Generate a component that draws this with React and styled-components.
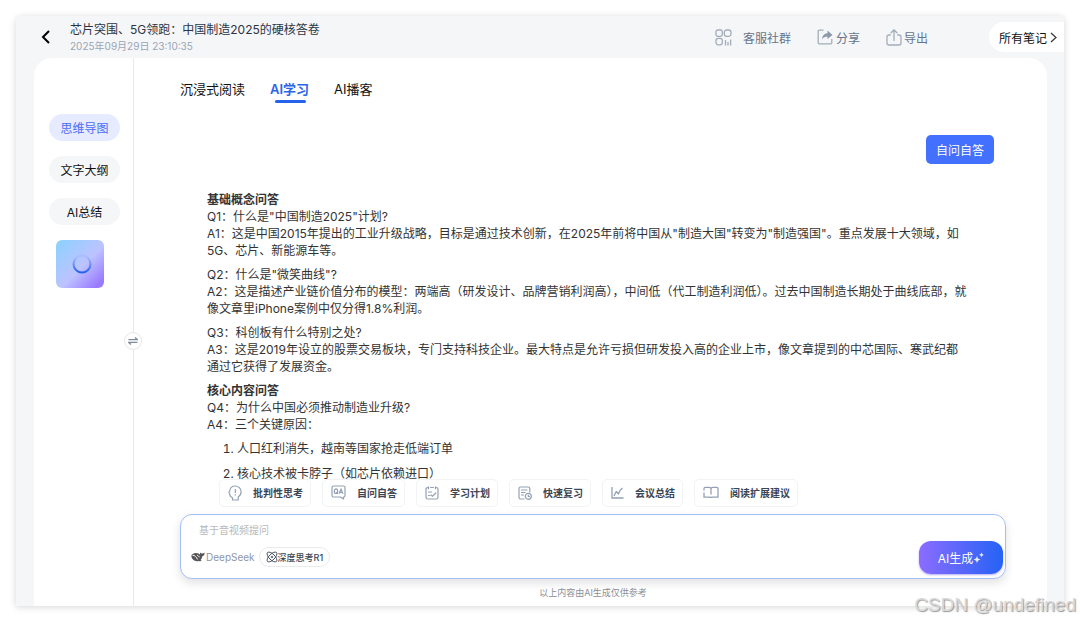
import { useState } from "react";
import { styled, createGlobalStyle } from "styled-components";

const tabs = ["沉浸式阅读", "AI学习", "AI播客"];
const views = ["思维导图", "文字大纲", "AI总结"];

const prompts = [
    { text: "批判性思考", icon: <HeadIcon /> },
    { text: "自问自答", icon: <QaIcon /> },
    { text: "学习计划", icon: <PlanIcon /> },
    { text: "快速复习", icon: <ReviewIcon /> },
    { text: "会议总结", icon: <ChartIcon /> },
    { text: "阅读扩展建议", icon: <BookIcon /> },
];

export default function App() {

    const [tab, setTab] = useState("AI学习")
    const [view, setView] = useState("思维导图")
    const [question, setQuestion] = useState("")

    return (
        <>
            <GlobalStyle />
            <Page>
                <Window>
                    <Header>
                        <BackButton aria-label="返回">
                            <svg width="10" height="16" viewBox="0 0 10 16"><path d="M8 2 2 8l6 6" fill="none" stroke="#000" strokeWidth="2" /></svg>
                        </BackButton>
                        <Heading>
                            <Title>芯片突围、5G领跑：中国制造2025的硬核答卷</Title>
                            <Time>2025年09月29日 23:10:35</Time>
                        </Heading>
                        <Actions>
                            <Action $gap="11px"><GroupIcon />客服社群</Action>
                            <Action $gap="3px"><ShareIcon />分享</Action>
                            <Action $gap="2px"><ExportIcon />导出</Action>
                        </Actions>
                        <NotesButton>
                            所有笔记
                            <svg width="7" height="11" viewBox="0 0 7 11"><path d="m1 1 5 4.500-5 4.500" fill="none" stroke="#333" strokeWidth="1.200" /></svg>
                        </NotesButton>
                    </Header>

                    <Sheet>
                        <Sidebar>
                            {views.map(v => (
                                <ViewButton key={v} $active={v === view} onClick={() => setView(v)}>{v}</ViewButton>
                            ))}
                            <Thumb><SpinnerIcon /></Thumb>
                            <SwapButton aria-label="切换"><SwapIcon /></SwapButton>
                        </Sidebar>

                        <Main>
                            <Tabs>
                                {tabs.map(t => (
                                    <Tab key={t} $active={t === tab} onClick={() => setTab(t)}>{t}</Tab>
                                ))}
                            </Tabs>

                            <ModeButton>自问自答</ModeButton>

                            <Article>
                                <div>
                                    <Subtitle>基础概念问答</Subtitle>
                                    <p>Q1：什么是"中国制造2025"计划?</p>
                                    <p>A1：这是中国2015年提出的工业升级战略，目标是通过技术创新，在2025年前将中国从"制造大国"转变为"制造强国"。重点发展十大领域，如5G、芯片、新能源车等。</p>
                                </div>
                                <div>
                                    <p>Q2：什么是"微笑曲线"?</p>
                                    <p>A2：这是描述产业链价值分布的模型：两端高（研发设计、品牌营销利润高），中间低（代工制造利润低）。过去中国制造长期处于曲线底部，就像文章里iPhone案例中仅分得1.8%利润。</p>
                                </div>
                                <div>
                                    <p>Q3：科创板有什么特别之处?</p>
                                    <p>A3：这是2019年设立的股票交易板块，专门支持科技企业。最大特点是允许亏损但研发投入高的企业上市，像文章提到的中芯国际、寒武纪都通过它获得了发展资金。</p>
                                </div>
                                <div>
                                    <Subtitle>核心内容问答</Subtitle>
                                    <p>Q4：为什么中国必须推动制造业升级?</p>
                                    <p>A4：三个关键原因：</p>
                                </div>
                                <Reasons>
                                    <li>人口红利消失，越南等国家抢走低端订单</li>
                                    <li>核心技术被卡脖子（如芯片依赖进口）</li>
                                </Reasons>
                            </Article>

                            <Prompts>
                                {prompts.map(p => (
                                    <Prompt key={p.text}>{p.icon}{p.text}</Prompt>
                                ))}
                            </Prompts>

                            <Composer>
                                <Fields>
                                    <Question
                                        aria-label="提问"
                                        placeholder="基于音视频提问"
                                        value={question}
                                        onChange={e => setQuestion(e.target.value)}
                                    />
                                    <Models>
                                        <Brand><WhaleIcon />DeepSeek</Brand>
                                        <ModelButton><AtomIcon />深度思考R1</ModelButton>
                                    </Models>
                                </Fields>
                                <Generate>AI生成<SparkIcon /></Generate>
                            </Composer>
                            <Notice>以上内容由AI生成仅供参考</Notice>
                        </Main>
                    </Sheet>
                </Window>
                <Watermark>CSDN @undefined</Watermark>
            </Page>
        </>
    )
}

function GroupIcon() {
    return (
        <svg width="17" height="17" viewBox="0 0 17 17" fill="none" stroke="#a3adba" strokeWidth="1.300">
            <rect x="1" y="1" width="6.300" height="6.300" rx="1.800" />
            <rect x="9.300" y="1" width="6.700" height="6.300" rx="2.400" />
            <rect x="1" y="9.300" width="6.300" height="6.500" rx="2.200" />
            <path d="M10.500 11v5.500M13 13v3.500M15.600 10.500v6" />
        </svg>
    )
}

function ShareIcon() {
    return (
        <svg width="16" height="16" viewBox="0 0 16 16" fill="none" stroke="#a3adba" strokeWidth="1.300">
            <path d="M6.500 1.200H2.200a1 1 0 0 0-1 1v11.600a1 1 0 0 0 1 1h11.600a1 1 0 0 0 1-1V10" />
            <path d="M5 10.500c.3-4 2.200-6 5.500-6.200V1.500l5 4.400-5 4.200V7.500c-2.500 0-4.200.8-5.500 3Z" fill="#8d98a8" stroke="none" />
        </svg>
    )
}

function ExportIcon() {
    return (
        <svg width="16" height="17" viewBox="0 0 16 17" fill="none" stroke="#a3adba" strokeWidth="1.300" strokeLinecap="round">
            <path d="M4.300 6H3a2 2 0 0 0-2 2v6a2 2 0 0 0 2 2h10a2 2 0 0 0 2-2V8a2 2 0 0 0-2-2h-1.300" />
            <path d="M8 11.500V1M5 3.700 8 .9l3 2.800" />
        </svg>
    )
}

function SpinnerIcon() {
    return (
        <svg width="20" height="20" viewBox="0 0 20 20" fill="none">
            <defs>
                <linearGradient id="ring" x1="0" y1="0" x2="0" y2="1">
                    <stop offset="0.1" stopColor="#a9bcff" />
                    <stop offset="0.5" stopColor="#6f91f5" />
                    <stop offset="1" stopColor="#2461f0" />
                </linearGradient>
            </defs>
            <circle cx="10" cy="10" r="8.500" stroke="url(#ring)" strokeWidth="2" />
        </svg>
    )
}

function SwapIcon() {
    return (
        <svg width="10" height="8" viewBox="0 0 10 8" fill="none" stroke="#7f8b9a" strokeWidth="1.300">
            <path d="M.5 2.700h9L7 .5M9.500 5.300h-9L3 7.500" />
        </svg>
    )
}

function HeadIcon() {
    return (
        <svg width="14" height="16" viewBox="0 0 14 16" fill="none" stroke="#94a1b3" strokeWidth="1.200" strokeLinejoin="round">
            <path d="M4.500 15v-2.200C2.700 12 1.600 10.500 1.600 8.500L.8 7.500l.9-1.300C2 3 4.300 1 7.200 1c3.300 0 5.900 2.500 5.900 5.800 0 2.200-1.100 4-2.900 5.100V15Z" />
            <path d="M7.300 4v4M7.300 9.200v1.300" />
        </svg>
    )
}

function QaIcon() {
    return (
        <svg width="15" height="15" viewBox="0 0 15 15" fill="none" stroke="#94a1b3" strokeWidth="1.200" strokeLinejoin="round">
            <path d="M2.500 1h10A1.500 1.500 0 0 1 14 2.500v8A1.500 1.500 0 0 1 12.500 12v2L9.500 12h-7A1.500 1.500 0 0 1 1 10.500v-8A1.500 1.500 0 0 1 2.500 1Z" />
            <ellipse cx="5" cy="6.200" rx="1.700" ry="2.300" />
            <path d="m5.300 7.200 1.600 1.700M8.200 8.800 10 3.900l1.900 4.900M8.900 7.300h2.200" />
        </svg>
    )
}

function PlanIcon() {
    return (
        <svg width="14" height="14" viewBox="0 0 14 14" fill="none" stroke="#94a1b3" strokeWidth="1.200" strokeLinecap="round">
            <path d="M3.500 1.500H2.800A1.800 1.800 0 0 0 1 3.300v7.900A1.800 1.800 0 0 0 2.800 13h8.400a1.800 1.800 0 0 0 1.800-1.800V3.300a1.800 1.800 0 0 0-1.800-1.800h-.7M5.500 1.500h3M3.500.8v2M10.500.8v2" />
            <path d="M3.500 6h3M3.500 9.500h1.200M6 9l1.500 1.200L10.800 7" />
        </svg>
    )
}

function ReviewIcon() {
    return (
        <svg width="14" height="14" viewBox="0 0 14 14" fill="none" stroke="#94a1b3" strokeWidth="1.200" strokeLinecap="round">
            <path d="M6 13H2.500A1.500 1.500 0 0 1 1 11.500v-9A1.500 1.500 0 0 1 2.500 1h7.800a1.500 1.500 0 0 1 1.500 1.500V6M3.500 4h5.500M3.500 6.500h3.500M3.500 9h2" />
            <circle cx="10.300" cy="10.300" r="3" />
            <path d="M10.300 9v1.500h1.200" />
        </svg>
    )
}

function ChartIcon() {
    return (
        <svg width="13" height="12" viewBox="0 0 13 12" fill="none" stroke="#94a1b3" strokeWidth="1.300">
            <path d="M1 0v11h11.500M3 9l2.200-4.500 2.300 2.300 1.700-3.500L11.500 1" />
        </svg>
    )
}

function BookIcon() {
    return (
        <svg width="16" height="13" viewBox="0 0 16 13" fill="none" stroke="#94a1b3" strokeWidth="1.300">
            <path d="M8 8.500V3c0-1-.8-1.700-2-1.700H2.200A1.200 1.200 0 0 0 1 2.500v2M1 6.500v4.700h5.500c.8 0 1.500.3 1.500.8 0-.5.700-.8 1.500-.8H15V2.500a1.200 1.200 0 0 0-1.200-1.200H10C8.800 1.300 8 2 8 3" />
        </svg>
    )
}

function WhaleIcon() {
    return (
        <svg width="14" height="10" viewBox="0 0 14 10">
            <path d="M.4 3.600C1 1.600 3 .8 5 .9c.8 0 1.300.2 1.900.7.900-.1 1.300.5 2.100 1 .2-.8-.2-1.500.1-2.200.5.700 1 .9 1.700 1 .9.100 1.900 0 2.800-.9.200 2-.8 3.400-2.400 3.900C11 6 10.300 7.200 9.500 8c.5.400 1 .5 1.400.7-1 .6-2.100.6-3 .2C4.300 10 .2 7.700.4 3.600Z" fill="#555" />
            <path d="M1.500 3.300c2.300-.2 3.900 1.700 5 4.100M6 3.600c1.100-.2 2 .5 2.200 1.700" fill="none" stroke="#fff" strokeWidth="1" />
        </svg>
    )
}

function AtomIcon() {
    return (
        <svg width="12" height="12" viewBox="0 0 12 12" fill="none" stroke="#3c4654" strokeWidth=".9">
            <ellipse cx="6" cy="6" rx="6.300" ry="2.900" transform="rotate(45 6 6)" />
            <ellipse cx="6" cy="6" rx="6.300" ry="2.900" transform="rotate(-45 6 6)" />
            <circle cx="6" cy="6" r=".8" />
        </svg>
    )
}

function SparkIcon() {
    return (
        <svg width="11" height="12" viewBox="0 0 11 12" fill="#e4eaff">
            <path d="M4 3.700c.5 2.600 1.200 3.200 3.700 3.800C5.200 8.100 4.500 8.800 4 11.400 3.500 8.800 2.800 8.100.3 7.500 2.800 6.900 3.500 6.300 4 3.700ZM8.500.3c.4 1.700.9 2.200 2.500 2.600-1.600.4-2.100.9-2.500 2.600-.4-1.700-.9-2.200-2.500-2.600 1.600-.4 2.100-.9 2.500-2.600Z" />
        </svg>
    )
}

const GlobalStyle = createGlobalStyle`
    * {
        box-sizing: border-box;
    }

    body {
        margin: 0;
        background-color: #FFFFFF;
        font-family: Inter, "Noto Sans CJK SC", sans-serif;
        font-size: 12px;
        color: #333333;
    }

    p, h1, h2, ol {
        margin: 0;
        padding: 0;
    }

    button, input {
        border: none;
        background: none;
        padding: 0;
        font: inherit;
        color: inherit;
    }

    button {
        display: flex;
        align-items: center;
        justify-content: center;
        white-space: nowrap;
        cursor: pointer;
    }

    svg {
        flex-shrink: 0;
    }
`

const Page = styled.div`
    position: relative;
    height: 100vh;
    padding: 16px;
`

const Window = styled.div`
    display: flex;
    flex-direction: column;
    height: 100%;
    overflow: hidden;

    border-radius: 6px 4px 0 0;
    background-color: #F5F6F8;
    box-shadow: 0 1px 7px rgba(0, 0, 0, 0.16);
`

const Header = styled.header`
    display: flex;
    align-items: center;
    height: 42px;
    padding-left: 24px;
    flex-shrink: 0;
`

const BackButton = styled.button`
    width: 12px;
    height: 24px;
`

const Heading = styled.div`
    flex: 1;
    padding-left: 18px;
`

const Title = styled.h1`
    font-size: 12px;
    line-height: 18px;
    font-weight: 400;
    color: #2B3544;
`

const Time = styled.p`
    font-size: 10px;
    line-height: 14px;
    color: #9AA5B5;
`

const Actions = styled.div`
    display: flex;
    gap: 26px;
    margin-right: 61px;
`

const Action = styled.button`
    gap: ${props => props.$gap};
    color: #66758A;
`

const NotesButton = styled.button`
    gap: 3px;
    height: 30px;
    padding: 0 7px 0 10px;

    color: #111111;
    background-color: #FFFFFF;
    border-radius: 15px 0 0 15px;
`

const Sheet = styled.div`
    display: flex;
    flex: 1;
    min-height: 0;
    margin: 0 17px 0 18px;

    background-color: #FFFFFF;
    border-radius: 18px 18px 0 0;
`

const Sidebar = styled.nav`
    position: relative;
    display: flex;
    flex-direction: column;
    gap: 15px;
    width: 100px;
    padding: 56px 13px 0 15px;
    flex-shrink: 0;
    border-right: 1px solid #E9EAED;
`

const ViewButton = styled.button`
    height: 27px;
    padding-bottom: 1px;
    border-radius: 14px;
    color: ${props => props.$active ? "#4A6CF7" : "#111111"};
    background-color: ${props => props.$active ? "#E6EBFF" : "#F5F6F8"};
`

const Thumb = styled.div`
    display: flex;
    align-items: center;
    justify-content: center;
    width: 48px;
    height: 48px;
    margin-left: 7px;
    padding-left: 4px;

    border-radius: 6px;
    background: linear-gradient(135deg, #8AD2FF 0%, #BDC3FF 55%, #9A7BFF 90%);
`

const SwapButton = styled.button`
    position: absolute;
    top: 50%;
    right: -9px;
    width: 18px;
    height: 18px;

    border: 1px solid #E4E6EA;
    border-radius: 50%;
    background-color: #FFFFFF;
`

const Main = styled.main`
    display: flex;
    flex-direction: column;
    flex: 1;
    min-width: 0;
    padding: 21px 41px 0 46px;
`

const Tabs = styled.div`
    display: flex;
    gap: 25px;
    flex-shrink: 0;
`

const Tab = styled.button`
    position: relative;
    height: 24px;
    padding-bottom: 5px;

    font-size: 13px;
    font-weight: ${props => props.$active ? 600 : 400};
    color: ${props => props.$active ? "#2B66E8" : "#111111"};

    &::after {
        content: "";
        display: ${props => props.$active ? "block" : "none"};
        position: absolute;
        bottom: 0;
        left: 5px;
        right: 3px;
        height: 3px;
        border-radius: 2px;
        background-color: #2563EB;
    }
`

const ModeButton = styled.button`
    align-self: flex-end;
    flex-shrink: 0;
    height: 29px;
    margin: 32px 12px 0 0;
    padding: 0 10px;

    color: #FFFFFF;
    background-color: #4370FF;
    border-radius: 5px;
`

const Article = styled.article`
    display: flex;
    flex-direction: column;
    gap: 7px;
    flex: 1;
    min-height: 0;
    overflow: hidden;
    margin: 27px 0 -4px;
    padding: 0 38px 0 27px;

    line-height: 17px;

    & > * {
        flex-shrink: 0;
    }
`

const Subtitle = styled.h2`
    font-size: 12px;
    font-weight: 600;
`

const Reasons = styled.ol`
    padding-left: 30px;

    li + li {
        margin-top: 8px;
    }
`

const Prompts = styled.div`
    display: flex;
    gap: 11px;
    flex-shrink: 0;
    padding-left: 39px;
`

const Prompt = styled.button`
    gap: 11px;
    height: 28px;
    padding: 0 7px 1px 8px;

    font-size: 10px;
    font-weight: 600;
    color: #3A4556;
    background-color: #FFFFFF;
    border: 1px solid #F2F3F5;
    border-radius: 5px;
`

const Composer = styled.div`
    display: flex;
    align-items: flex-end;
    flex-shrink: 0;
    height: 65px;
    margin-top: 7px;
    padding: 0 2px 4px 10px;

    border: 1px solid #A3BFFA;
    border-radius: 12px;
    background-color: #FFFFFF;
    box-shadow: 0 4px 10px rgba(0, 0, 0, 0.12);
`

const Fields = styled.div`
    flex: 1;
    height: 100%;
    padding-bottom: 7px;
    display: flex;
    flex-direction: column;
    justify-content: space-between;
`

const Question = styled.input`
    height: 30px;
    padding-left: 8px;
    font-size: 10px;
    outline: none;

    &::placeholder {
        color: #B8B8B8;
    }
`

const Models = styled.div`
    display: flex;
    align-items: center;
    gap: 4px;
`

const Brand = styled.span`
    display: flex;
    align-items: center;
    gap: 1px;
    font-size: 10px;
    color: #8E96A8;
`

const ModelButton = styled.button`
    height: 20px;
    padding: 0 6px;
    font-size: 9px;
    font-weight: 500;
    color: #3C4654;
    border: 1px solid #E8EAED;
    border-radius: 10px;
`

const Generate = styled.button`
    width: 84px;
    height: 33px;

    color: #FFFFFF;
    border-radius: 12px;
    background: linear-gradient(90deg, #8B6CFF 0%, #2563F5 100%);
    box-shadow: 0 1px 2px rgba(110, 90, 240, 0.5);
`

const Notice = styled.p`
    flex-shrink: 0;
    height: 27px;
    padding-top: 7px;

    font-size: 9px;
    line-height: 14px;
    text-align: center;
    color: #8A8F99;
`

const Watermark = styled.div`
    position: absolute;
    right: 4px;
    bottom: 5px;

    font-family: "Liberation Sans", Arial, sans-serif;
    font-size: 19px;
    line-height: 24px;
    color: #DADADA;
    text-shadow: 1px 1px 1px rgba(0, 0, 0, 0.4);
`
